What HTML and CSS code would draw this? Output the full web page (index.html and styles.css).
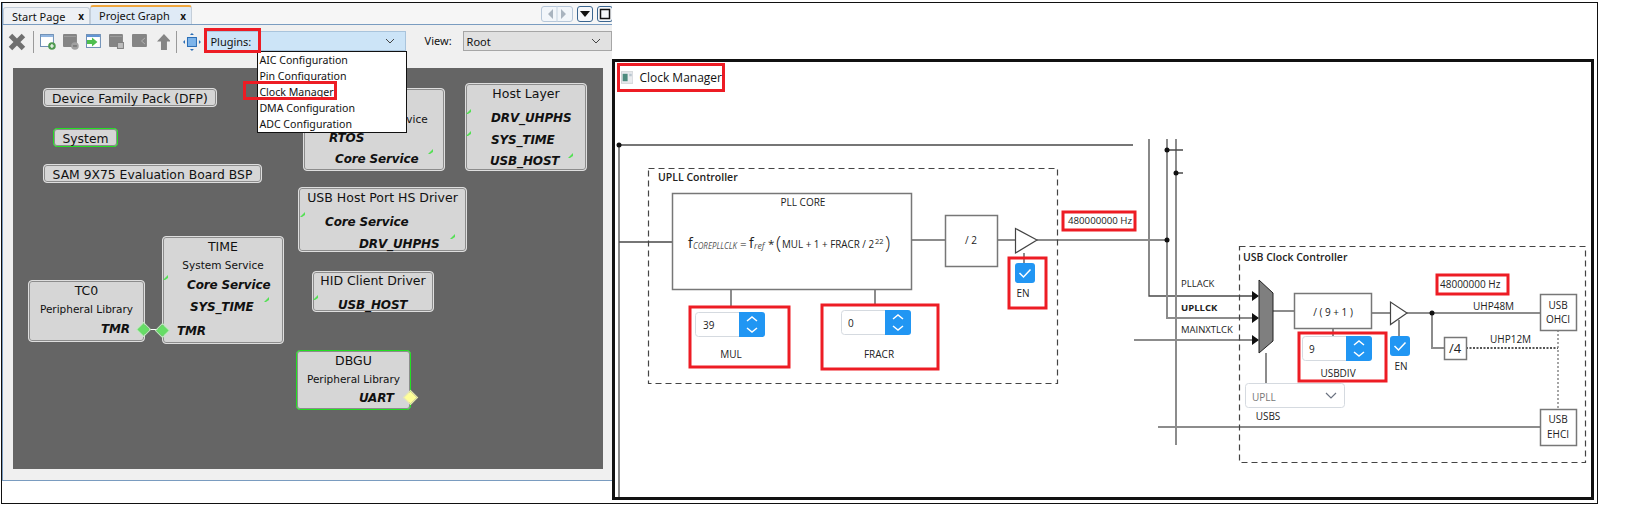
FILE: index.html
```html
<!DOCTYPE html>
<html lang="en">
<head>
    <meta charset="UTF-8">
    <title>Project Graph and Clock Manager</title>
    <link rel="stylesheet" href="styles.css">
</head>
<body>
<div class="shot">
    <div class="left">
        <div class="tabs">
            <div class="tab">Start Page <span class="tab-x">x</span></div>
            <div class="tab tab-active">Project Graph <span class="tab-x">x</span></div>
            <div class="nav-btns">
                <div class="nav-pair">
                    <svg width="30" height="16" viewBox="0 0 30 16"><path d="M11 3v10L6 8zM19 3v10l5-5z" fill="#a9b4bf"/><path d="M15 0v16" stroke="#c5d3e0"/></svg>
                </div>
                <div class="nav-btn"><svg width="14" height="14" viewBox="0 0 14 14"><path d="M2 4h10L7 10z" fill="#111"/></svg></div>
                <div class="nav-btn"><svg width="14" height="14" viewBox="0 0 14 14"><rect x="2.500" y="2.500" width="9" height="9" fill="none" stroke="#111" stroke-width="1.500"/></svg></div>
            </div>
        </div>
        <div class="toolbar">
            <svg class="tool-x" width="18" height="18" viewBox="0 0 18 18"><path d="M2.500 2.500l13 13M15.500 2.500l-13 13" stroke="#707070" stroke-width="5"/></svg>
            <span class="tool-sep"></span>
            <svg class="tool" width="16" height="16" viewBox="0 0 16 16"><rect x="0.500" y="0.500" width="13" height="12" fill="#fff" stroke="#6d8fb5"/><rect x="1" y="1" width="12" height="2" fill="#8fb4e0"/><circle cx="12" cy="12" r="3.800" fill="#4f9a4f"/><path d="M10 12h4M12 10v4" stroke="#fff" stroke-width="1.200"/></svg>
            <svg class="tool" width="16" height="16" viewBox="0 0 16 16"><rect x="0" y="0" width="14" height="13" rx="1" fill="#858585"/><rect x="1" y="2" width="12" height="1" fill="#9d9d9d"/><circle cx="12" cy="12" r="3.800" fill="#a0a0a0"/><path d="M10 12h4" stroke="#6a6a6a" stroke-width="1.200"/></svg>
            <svg class="tool" width="16" height="16" viewBox="0 0 16 16"><rect x="0.500" y="0.500" width="14" height="13" fill="#fff" stroke="#6d8fb5"/><rect x="1" y="1" width="13" height="2" fill="#5f93d4"/><path d="M1 6h5V3.500L11.500 8 6 12.500V10H1z" fill="#4fbf4f"/></svg>
            <svg class="tool" width="16" height="16" viewBox="0 0 16 16"><rect x="0" y="0" width="14" height="13" rx="1" fill="#858585"/><rect x="1" y="2" width="12" height="1" fill="#9d9d9d"/><rect x="8.500" y="8.500" width="6" height="6" fill="#bdbdbd" stroke="#808080"/></svg>
            <svg class="tool" width="16" height="16" viewBox="0 0 16 16"><rect x="0" y="0" width="15" height="13" rx="1" fill="#858585"/><path d="M13 4L9.500 7l3.500 3" fill="none" stroke="#b0b0b0"/></svg>
            <svg class="tool tool-up" width="14" height="16" viewBox="0 0 14 16"><path d="M7 0l7 7.500H10V16H4V7.500H0z" fill="#858585"/></svg>
            <span class="tool-sep tool-sep-b"></span>
            <svg class="tool tool-fit" width="18" height="18" viewBox="0 0 18 18"><rect x="4.500" y="4.500" width="9" height="9" fill="#7db4ea" stroke="#2a6db5"/><path d="M9 0l2 2H7zM9 18l2-2H7zM0 9l2-2v4zM18 9l-2-2v4z" fill="#2a6db5"/></svg>
            <div class="combo combo-plugins">
                <span>Plugins:</span>
                <svg class="chevron" width="10" height="6" viewBox="0 0 10 6"><path d="M1 1l4 4 4-4" fill="none" stroke="#444"/></svg>
                <ul class="menu">
                    <li>AIC Configuration</li>
                    <li>Pin Configuration</li>
                    <li>Clock Manager</li>
                    <li>DMA Configuration</li>
                    <li>ADC Configuration</li>
                </ul>
            </div>
            <span class="view-label">View:</span>
            <div class="combo combo-root">
                <span>Root</span>
                <svg class="chevron" width="10" height="6" viewBox="0 0 10 6"><path d="M1 1l4 4 4-4" fill="none" stroke="#444"/></svg>
            </div>
            <span class="mark mark-plugins"></span>
            <span class="mark mark-clock"></span>
        </div>
        <div class="graph">
            <div class="node pill pill-dfp">Device Family Pack (DFP)</div>
            <div class="node pill pill-system">System</div>
            <div class="node pill pill-bsp">SAM 9X75 Evaluation Board BSP</div>

            <div class="node node-rtos">
                <div class="sub sub-rtos">System Service</div>
                <div class="port port-rtos">RTOS</div>
                <div class="port port-core">Core Service</div>
                <i class="tick tick-rtos"></i>
            </div>
            <div class="node node-host">
                <div class="title">Host Layer</div>
                <div class="port port-drv port-drv-first">DRV_UHPHS</div>
                <div class="port port-drv">SYS_TIME</div>
                <div class="port port-usb">USB_HOST</div>
                <i class="tick tick-h1"></i><i class="tick tick-h2"></i><i class="tick tick-h3"></i>
            </div>
            <div class="node node-port">
                <div class="title">USB Host Port HS Driver</div>
                <div class="port port-pcore">Core Service</div>
                <div class="port port-pdrv">DRV_UHPHS</div>
                <i class="tick tick-p1"></i><i class="tick tick-p2"></i>
            </div>
            <div class="node node-hid">
                <div class="title">HID Client Driver</div>
                <div class="port port-hid">USB_HOST</div>
                <i class="tick tick-hid"></i>
            </div>
            <div class="node node-time">
                <div class="title">TIME</div>
                <div class="sub">System Service</div>
                <div class="port port-tcore">Core Service</div>
                <div class="port port-tsys">SYS_TIME</div>
                <div class="port port-ttmr">TMR</div>
                <i class="tick tick-t1"></i><i class="tick tick-t2"></i>
            </div>
            <div class="node node-tc">
                <div class="title">TC0</div>
                <div class="sub">Peripheral Library</div>
                <div class="port port-right">TMR</div>
            </div>
            <div class="node node-dbgu">
                <div class="title">DBGU</div>
                <div class="sub">Peripheral Library</div>
                <div class="port port-uart">UART</div>
            </div>
            <i class="link"></i>
            <i class="diamond diamond-a"></i>
            <i class="diamond diamond-b"></i>
            <i class="diamond diamond-y"></i>
        </div>
    </div>

    <div class="right">
        <div class="frame">
            <svg class="wires" width="976" height="435" viewBox="615 62 976 435">
                <defs>
                    <g id="spin">
                        <rect x="0.500" y="0.500" width="50" height="24" rx="3" fill="#fff" stroke="#d5dae0"/>
                        <path d="M44 0h23a3 3 0 0 1 3 3v19a3 3 0 0 1-3 3H44z" fill="#2196f3"/>
                        <path d="M52 9l5-4 5 4M52 16l5 4 5-4" fill="none" stroke="#fff" stroke-width="1.500"/>
                    </g>
                    <g id="check">
                        <rect width="20" height="20" rx="3" fill="#2196f3"/>
                        <path d="M4.500 10l4 4 7-7.500" fill="none" stroke="#fff" stroke-width="1.500"/>
                    </g>
                </defs>

                <!-- clock tree wires -->
                <g class="wire-thin">
                    <path d="M619 145H1133M619 145V497M619 242H672"/>
                    <path d="M1149 139V296H1252"/>
                </g>
                <g class="wire">
                    <path d="M911 240H945M997 240H1015M1037 240H1167M1024 253V264"/>
                    <path d="M731 289V307M875 289V305"/>
                    <path d="M1167 139V318H1252M1176 139V445"/>
                    <path d="M1134 340H1252M1158 427H1540"/>
                    <path d="M1273 311H1294M1371 313H1390M1407 313H1540M1399 320V337"/>
                    <path d="M1333 328V337M1266 353V383M1432 313V348H1444"/>
                </g>
                <path d="M1167 150H1183M1176 173H1183" class="wire-thin"/>
                <path d="M1466 348H1558" class="dots"/>
                <path d="M1558 330V409" class="dots-light"/>
                <g class="dot">
                    <circle cx="619" cy="145" r="2.500"/>
                    <circle cx="1167" cy="150" r="2.500"/>
                    <circle cx="1176" cy="173" r="2.500"/>
                    <circle cx="1167" cy="240" r="2.500"/>
                    <circle cx="1432" cy="313" r="2.500"/>
                    <path d="M1252 291l7 5-7 5zM1252 313l7 5-7 5zM1252 335l7 5-7 5z"/>
                </g>

                <!-- dashed controllers -->
                <rect x="648.500" y="168.500" width="409" height="215" class="dash"/>
                <rect x="1239.500" y="246.500" width="346" height="216" class="dash"/>

                <!-- blocks -->
                <g class="block">
                    <rect x="672.500" y="193.500" width="239" height="96"/>
                    <rect x="945.500" y="215.500" width="52" height="51"/>
                    <rect x="1294.500" y="293.500" width="77" height="35"/>
                    <rect x="1444.500" y="337.500" width="22" height="22"/>
                    <rect x="1540.500" y="294.500" width="36" height="36"/>
                    <rect x="1540.500" y="409.500" width="36" height="36"/>
                </g>
                <g class="amp">
                    <path d="M1015.500 228.500V253L1037 240z"/>
                    <path d="M1390.500 302V324.500L1407 313z"/>
                </g>
                <path d="M1259 280L1273 293V341L1259 353z" fill="#7f7f7f" stroke="#222"/>

                <!-- inputs -->
                <use href="#spin" x="695" y="312"/>
                <use href="#spin" x="841" y="310"/>
                <use href="#spin" x="1302" y="336"/>
                <use href="#check" x="1015" y="263"/>
                <use href="#check" x="1390" y="336"/>
                <rect x="1245.500" y="383.500" width="99" height="24" rx="3" fill="#fff" stroke="#d5dae0"/>
                <path d="M1326 393l5 5 5-5" fill="none" stroke="#6b7280" stroke-width="1.200"/>

                <!-- labels -->
                <text x="658" y="181" class="strong">UPLL Controller</text>
                <text x="1243" y="261" class="strong">USB Clock Controller</text>
                <text x="803" y="206" class="mid">PLL CORE</text>
                <text x="688" y="248" class="formula fbig">f</text>
                <text x="693" y="249" class="formula fsub" textLength="44" lengthAdjust="spacingAndGlyphs">COREPLLCLK</text>
                <text x="740" y="248" class="formula">=</text>
                <text x="749" y="248" class="formula fbig">f</text>
                <text x="754" y="249" class="formula fsub">ref</text>
                <text x="768" y="248" class="formula">*</text>
                <text x="776" y="249" class="formula paren">(</text>
                <text x="782" y="248" class="formula" textLength="92" lengthAdjust="spacingAndGlyphs">MUL + 1 + FRACR / 2</text>
                <text x="875" y="244" class="formula fsup">22</text>
                <text x="885" y="249" class="formula paren">)</text>
                <text x="971" y="244" class="mid">/ 2</text>
                <text x="1333" y="316" class="mid">/ ( 9 + 1 )</text>
                <text x="1455" y="353" class="mid big">/4</text>
                <text x="1023" y="297" class="mid">EN</text>
                <text x="1401" y="370" class="mid">EN</text>
                <text x="731" y="358" class="mid">MUL</text>
                <text x="879" y="358" class="mid">FRACR</text>
                <text x="1338" y="377" class="mid">USBDIV</text>
                <text x="1268" y="420" class="mid">USBS</text>
                <text x="1068" y="224" class="freq">480000000 Hz</text>
                <text x="1440" y="288">48000000 Hz</text>
                <text x="703" y="329">39</text>
                <text x="848" y="327">0</text>
                <text x="1309" y="353">9</text>
                <text x="1252" y="401" class="muted">UPLL</text>
                <text x="1181" y="287" class="small">PLLACK</text>
                <text x="1181" y="311" class="small semi">UPLLCK</text>
                <text x="1181" y="333" class="small">MAINXTLCK</text>
                <text x="1473" y="310">UHP48M</text>
                <text x="1490" y="343">UHP12M</text>
                <text x="1558" y="309" class="mid">USB</text>
                <text x="1558" y="323" class="mid">OHCI</text>
                <text x="1558" y="423" class="mid">USB</text>
                <text x="1558" y="438" class="mid">EHCI</text>

                <!-- red highlights -->
                <g class="hi">
                    <rect x="690" y="307" width="99" height="60"/>
                    <rect x="822" y="305" width="116" height="64"/>
                    <rect x="1009" y="258" width="37" height="50"/>
                    <rect x="1063" y="212" width="72" height="18"/>
                    <rect x="1437" y="275" width="71" height="19"/>
                    <rect x="1299" y="333" width="87" height="48"/>
                </g>
            </svg>
            <div class="clock-title">
                <svg width="15" height="15" viewBox="0 0 15 15"><rect x="0.500" y="0.500" width="14" height="14" fill="#e9ebee" stroke="#c9ccd0"/><rect x="2" y="3" width="6" height="9" fill="#4d8a7e"/><rect x="10" y="3" width="3" height="3" fill="#b9c6cf"/></svg>
                <span>Clock Manager</span>
            </div>
        </div>
    </div>
</div>
</body>
</html>
```

FILE: styles.css
```css
* {
    box-sizing: border-box;
}
body {
    margin: 0;
    background: white;
    font-family: "Noto Sans", sans-serif;
    color: #111;
}
.shot {
    display: flex;
    width: 1597px;
    height: 502px;
    margin: 2px 0 0 1px;
    border: 1px solid #111;
}

/* left panel: project graph */
.left {
    width: 610px;
    height: 478px;
    background: #f0f0f0;
    border-left: 1px solid #7a9cc0;
    border-bottom: 1px solid #7a9cc0;
    font-family: "DejaVu Sans", sans-serif;
}
.tabs {
    display: flex;
    align-items: flex-end;
    height: 22px;
    overflow: hidden;
    background: #f6f6f6;
    border-bottom: 1px solid #7a9cc0;
    font-size: 11px;
    font-family: "Noto Sans", sans-serif;
}
.tab {
    display: flex;
    justify-content: space-between;
    align-items: center;
    width: 87px;
    height: 17px;
    padding: 0 5px 0 8px;
    background: #eef1f5;
    border: 1px solid #c4ced9;
    border-bottom: none;
    border-radius: 3px 3px 0 0;
}
.tab-active {
    width: 102px;
    height: 19px;
    padding-left: 8px;
    background: #dfeaf6;
    border-top: 2px solid #f0a63c;
}
.tab-x {
    font-weight: bold;
    font-size: 10px;
}
.nav-btns {
    display: flex;
    flex-shrink: 0;
    gap: 4px;
    align-self: flex-start;
    margin: 3px -1px 0 auto;
}
.nav-pair {
    width: 32px;
    height: 16px;
    background: #f2f6fa;
    border: 1px solid #b6c7d9;
    border-radius: 3px;
}
.nav-pair svg {
    display: block;
    margin-top: -1px;
}
.nav-btn {
    width: 16px;
    height: 16px;
    background: #f5f7fa;
    border: 1px solid #3b6690;
    border-radius: 3px;
}
.nav-btn svg {
    display: block;
    margin: 0;
}
.toolbar {
    position: relative;
    display: flex;
    align-items: flex-start;
    height: 43px;
    padding: 6px 0 0 5px;
}
.tool-x {
    margin-top: 2px;
}
.tool-sep {
    width: 1px;
    height: 22px;
    margin: 0 6px 0 7px;
    background: #9a9a9a;
}
.tool {
    margin: 3px 7px 0 0;
}
.tool-up {
    margin-left: 2px;
    margin-right: 6px;
}
.tool-sep-b {
    margin-left: 0;
}
.tool-fit {
    margin: 2px 5px 0 0;
}
.combo {
    position: relative;
    display: flex;
    align-items: center;
    justify-content: space-between;
    width: 200px;
    height: 20px;
    padding: 0 10px 0 3px;
    font-size: 11px;
    font-family: "Noto Sans", sans-serif;
    background: #cce4f7;
    border: 1px solid #a9c4dc;
}
.combo-root {
    width: 150px;
    background: #e1e1e1;
    border-color: #a6a6a6;
}
.view-label {
    margin: 2px 11px 0 19px;
    font-size: 11px;
    font-family: "Noto Sans", sans-serif;
}
.menu {
    position: absolute;
    top: 19px;
    left: 50px;
    z-index: 3;
    width: 150px;
    height: 82px;
    margin: 0;
    padding: 0 0 0 1px;
    list-style: none;
    background: white;
    border: 1px solid #111;
    font-size: 10.6px;
}
.menu li {
    height: 16px;
    line-height: 16px;
    white-space: nowrap;
}
.mark {
    position: absolute;
    z-index: 4;
    border: 3px solid #ed1c24;
}
.mark-plugins {
    left: 201px;
    top: 3px;
    width: 57px;
    height: 25px;
}
.mark-clock {
    left: 240px;
    top: 56px;
    width: 94px;
    height: 19px;
}

/* graph canvas */
.graph {
    position: relative;
    width: 590px;
    height: 401px;
    margin-left: 10px;
    background: #656565;
}
.node {
    position: absolute;
    background: #d6d6d6;
    border: 1px solid #dedede;
    box-shadow: inset 0 0 0 1px #8c8c8c;
    border-radius: 4px;
    font-size: 12.5px;
    text-align: center;
    white-space: nowrap;
}
.pill {
    height: 19px;
    line-height: 20px;
    font-size: 12.35px;
}
.pill-dfp {
    left: 30px;
    top: 20px;
    width: 174px;
}
.pill-system {
    left: 40px;
    top: 60px;
    width: 65px;
    border-color: #22e022;
}
.pill-bsp {
    left: 30px;
    top: 96px;
    width: 219px;
}
.title {
    height: 18px;
    line-height: 18px;
    font-size: 12.5px;
    margin-top: 1px;
}
.sub {
    height: 18px;
    line-height: 18px;
    font-size: 10.5px;
}
.port {
    height: 21px;
    line-height: 21px;
    font-size: 12px;
    font-weight: bold;
    font-style: italic;
    font-family: "DejaVu Sans", sans-serif;
    letter-spacing: -0.15px;
    text-align: left;
}
.node-rtos {
    left: 290px;
    top: 20px;
    width: 142px;
    height: 83px;
}
.sub-rtos {
    margin-top: 21px;
    padding-left: 26px;
}
.port-rtos {
    padding-left: 25px;
}
.port-core {
    margin-top: 0;
    padding-left: 31px;
}
.node-host {
    left: 452px;
    top: 15px;
    width: 122px;
    height: 88px;
}
.port-drv {
    padding-left: 25px;
    margin-top: 1px;
}
.port-drv-first {
    margin-top: 5px;
}
.port-usb {
    padding-left: 24px;
}
.node-port {
    left: 285px;
    top: 119px;
    width: 169px;
    height: 65px;
}
.port-pcore {
    padding-left: 26px;
    margin-top: 5px;
}
.port-pdrv {
    padding-left: 60px;
    margin-top: 1px;
}
.node-hid {
    left: 299px;
    top: 203px;
    width: 122px;
    height: 41px;
}
.node-hid .title {
    margin-top: 0;
}
.port-hid {
    padding-left: 25px;
    margin-top: 5px;
}
.node-time {
    left: 149px;
    top: 168px;
    width: 122px;
    height: 108px;
}
.port-tcore {
    padding-left: 24px;
    margin-top: 1px;
}
.port-tsys {
    padding-left: 27px;
    margin-top: 1px;
}
.port-ttmr {
    padding-left: 14px;
    margin-top: 3px;
}
.node-tc {
    left: 15px;
    top: 212px;
    width: 117px;
    height: 62px;
}
.port-right {
    padding-left: 72px;
    margin-top: 1px;
}
.node-dbgu {
    left: 283px;
    top: 282px;
    width: 115px;
    height: 60px;
    border-color: #22e022;
}
.port-uart {
    padding-left: 62px;
}
.tick {
    position: absolute;
    width: 5px;
    height: 5px;
    background: #55e055;
    clip-path: polygon(0 100%, 100% 0, 100% 60%, 40% 100%);
}
.tick-rtos {
    left: 124px;
    top: 60px;
}
.tick-h1 {
    left: 0;
    top: 25px;
}
.tick-h2 {
    left: 0;
    top: 47px;
}
.tick-h3 {
    left: 102px;
    top: 69px;
}
.tick-p1 {
    left: 1px;
    top: 24px;
}
.tick-p2 {
    left: 151px;
    top: 46px;
}
.tick-hid {
    left: 0;
    top: 23px;
}
.tick-t1 {
    left: 0;
    top: 38px;
}
.tick-t2 {
    left: 101px;
    top: 60px;
}
.link {
    position: absolute;
    left: 135px;
    top: 261px;
    width: 14px;
    height: 1px;
    background: white;
}
.diamond {
    position: absolute;
    width: 9px;
    height: 9px;
    background: #66dd66;
    outline: 1px solid #bfe8bf;
    transform: rotate(45deg);
}
.diamond-a {
    left: 126px;
    top: 257px;
}
.diamond-b {
    left: 145px;
    top: 258px;
}
.diamond-y {
    left: 393px;
    top: 325px;
    background: #ffff99;
    outline-color: #e8e8b0;
}

/* right panel: clock manager */
.right {
    flex: 1;
    padding-top: 56px;
}
.frame {
    position: relative;
    width: 982px;
    height: 441px;
    background: white;
    border: 3px solid #111;
}
.wires {
    position: absolute;
    left: 0;
    top: 0;
    font-family: "Open Sans", sans-serif;
    font-size: 10px;
    fill: #222;
}
.clock-title {
    position: relative;
    display: flex;
    align-items: center;
    gap: 6px;
    width: 108px;
    height: 29px;
    margin: 1px 0 0 2px;
    padding-left: 1px;
    border: 3px solid #ed1c24;
    font-family: "Open Sans", sans-serif;
    font-size: 12px;
    white-space: nowrap;
}
.wire path, .wire {
    fill: none;
    stroke: #8c8c8c;
    stroke-width: 2;
}
.wire-thin, .wire-thin path {
    fill: none;
    stroke: #4a4a4a;
    stroke-width: 1.300;
}
.dots {
    fill: none;
    stroke: #555;
    stroke-width: 2;
    stroke-dasharray: 2 1.500;
}
.dots-light {
    fill: none;
    stroke: #888;
    stroke-width: 1.500;
    stroke-dasharray: 2 2;
}
.dot {
    fill: #111;
}
.dash {
    fill: none;
    stroke: #444;
    stroke-width: 1.200;
    stroke-dasharray: 6 4;
}
.block rect {
    fill: white;
    stroke: #777;
    stroke-width: 1.500;
}
.amp path {
    fill: white;
    stroke: #444;
    stroke-width: 1.200;
}
.hi rect {
    fill: none;
    stroke: #ed1c24;
    stroke-width: 3;
}
.strong {
    font-weight: 600;
    font-size: 10.5px;
}
.mid {
    text-anchor: middle;
}
.big {
    font-size: 13px;
}
.small {
    font-size: 9.500px;
}
.semi {
    font-weight: 700;
}
.muted {
    fill: #777;
}
.freq {
    font-size: 9.700px;
}
.formula {
    font-size: 11.500px;
}
.formula.fbig {
    font-size: 14px;
}
.formula.fsub {
    font-size: 8.800px;
    font-style: italic;
    fill: #555;
}
.formula.fsup {
    font-size: 7.500px;
}
.formula.paren {
    font-size: 19px;
    font-weight: 300;
}
```
